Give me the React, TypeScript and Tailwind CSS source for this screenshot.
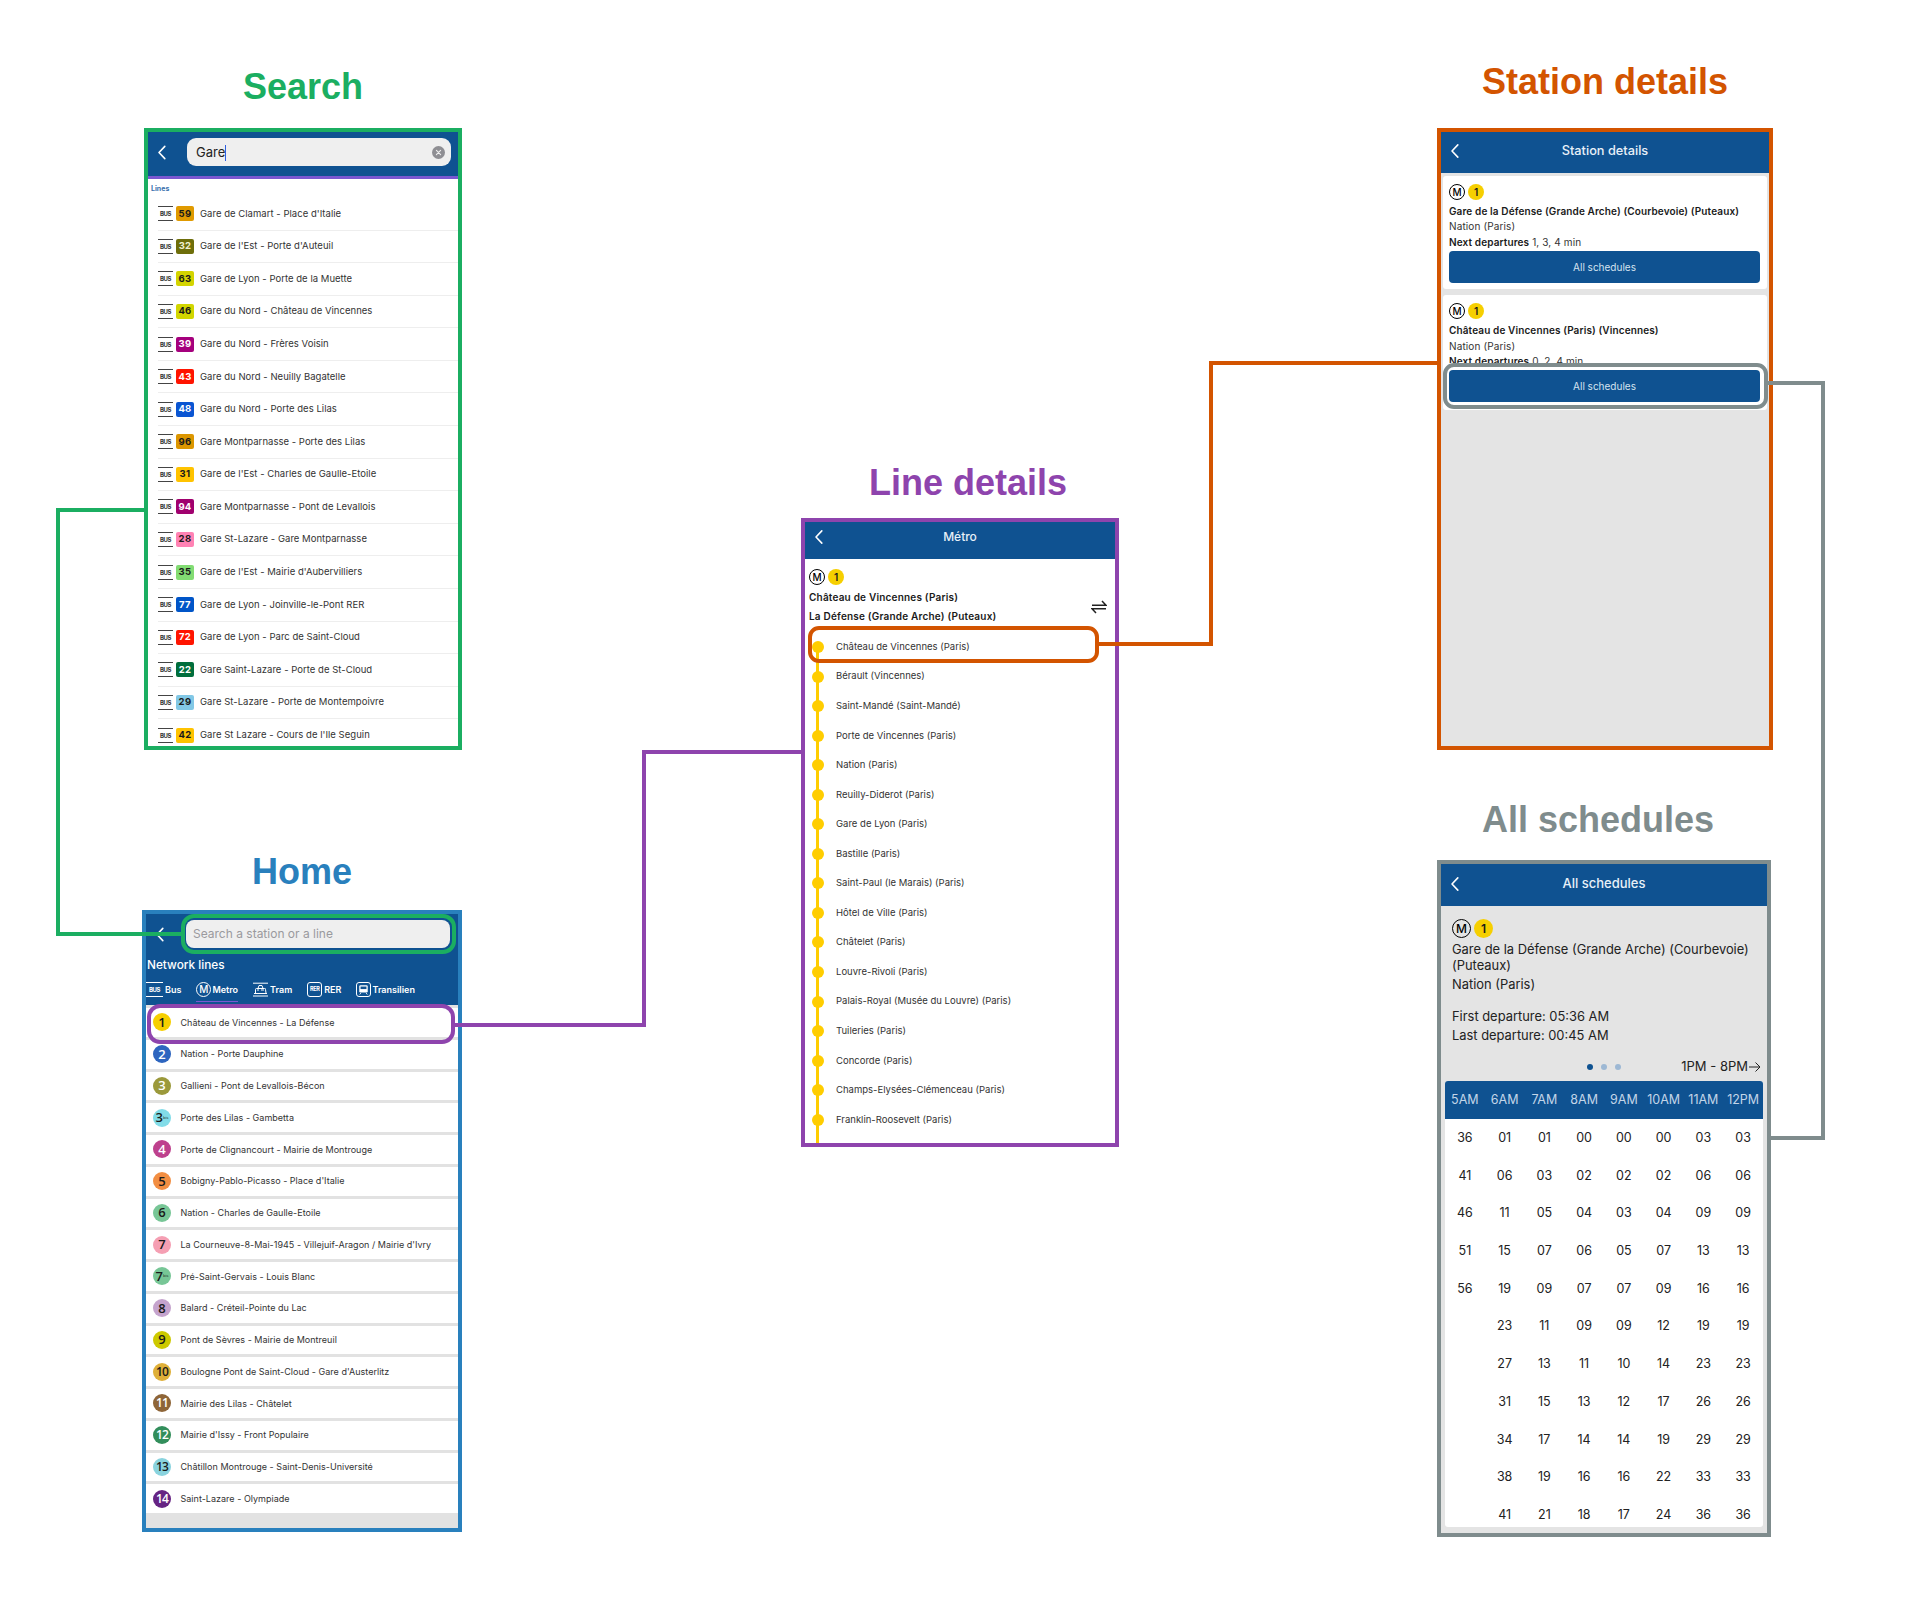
import React from "react";

const busLines: [string, string, string, string][] = [
  ["59", "#e09a00", "#1a1a1a", "Gare de Clamart - Place d'Italie"],
  ["32", "#6e6e0a", "#f0f0d0", "Gare de l'Est - Porte d'Auteuil"],
  ["63", "#d4d400", "#1a1a1a", "Gare de Lyon - Porte de la Muette"],
  ["46", "#d2d600", "#1a1a1a", "Gare du Nord - Château de Vincennes"],
  ["39", "#a5007d", "#ffffff", "Gare du Nord - Frères Voisin"],
  ["43", "#ff1400", "#ffffff", "Gare du Nord - Neuilly Bagatelle"],
  ["48", "#0a55d2", "#ffffff", "Gare du Nord - Porte des Lilas"],
  ["96", "#dc9600", "#1a1a1a", "Gare Montparnasse - Porte des Lilas"],
  ["31", "#ffc300", "#1a1a1a", "Gare de l'Est - Charles de Gaulle-Etoile"],
  ["94", "#a0006e", "#ffffff", "Gare Montparnasse - Pont de Levallois"],
  ["28", "#ff82b4", "#1a1a1a", "Gare St-Lazare - Gare Montparnasse"],
  ["35", "#82dc73", "#1a1a1a", "Gare de l'Est - Mairie d'Aubervilliers"],
  ["77", "#0055c8", "#ffffff", "Gare de Lyon - Joinville-le-Pont RER"],
  ["72", "#ff1400", "#ffffff", "Gare de Lyon - Parc de Saint-Cloud"],
  ["22", "#006e3c", "#ffffff", "Gare Saint-Lazare - Porte de St-Cloud"],
  ["29", "#82c8e6", "#1a1a1a", "Gare St-Lazare - Porte de Montempoivre"],
  ["42", "#ffc300", "#1a1a1a", "Gare St Lazare - Cours de l'Ile Seguin"],
];

const metroLines: [string, string, string, string, string?][] = [
  ["1", "#f6cf00", "#1a1a1a", "Château de Vincennes - La Défense"],
  ["2", "#2d65bf", "#ffffff", "Nation - Porte Dauphine"],
  ["3", "#9b993b", "#ffffff", "Gallieni - Pont de Levallois-Bécon"],
  ["3", "#82dce8", "#1a1a1a", "Porte des Lilas - Gambetta", "bis"],
  ["4", "#be418d", "#ffffff", "Porte de Clignancourt - Mairie de Montrouge"],
  ["5", "#f28e42", "#1a1a1a", "Bobigny-Pablo-Picasso - Place d'Italie"],
  ["6", "#77c696", "#1a1a1a", "Nation - Charles de Gaulle-Etoile"],
  ["7", "#f59fb3", "#1a1a1a", "La Courneuve-8-Mai-1945 - Villejuif-Aragon / Mairie d'Ivry"],
  ["7", "#77c696", "#1a1a1a", "Pré-Saint-Gervais - Louis Blanc", "bis"],
  ["8", "#c5a3cd", "#1a1a1a", "Balard - Créteil-Pointe du Lac"],
  ["9", "#cdc900", "#1a1a1a", "Pont de Sèvres - Mairie de Montreuil"],
  ["10", "#dfb039", "#1a1a1a", "Boulogne Pont de Saint-Cloud - Gare d'Austerlitz"],
  ["11", "#8e6538", "#ffffff", "Mairie des Lilas - Châtelet"],
  ["12", "#328e5b", "#ffffff", "Mairie d'Issy - Front Populaire"],
  ["13", "#89d3de", "#1a1a1a", "Châtillon Montrouge - Saint-Denis-Université"],
  ["14", "#662483", "#ffffff", "Saint-Lazare - Olympiade"],
];

const stops = [
  "Château de Vincennes (Paris)", "Bérault (Vincennes)", "Saint-Mandé (Saint-Mandé)", "Porte de Vincennes (Paris)",
  "Nation (Paris)", "Reuilly-Diderot (Paris)", "Gare de Lyon (Paris)", "Bastille (Paris)",
  "Saint-Paul (le Marais) (Paris)", "Hôtel de Ville (Paris)", "Châtelet (Paris)", "Louvre-Rivoli (Paris)",
  "Palais-Royal (Musée du Louvre) (Paris)", "Tuileries (Paris)", "Concorde (Paris)",
  "Champs-Elysées-Clémenceau (Paris)", "Franklin-Roosevelt (Paris)",
];

const hours = ["5AM", "6AM", "7AM", "8AM", "9AM", "10AM", "11AM", "12PM"];
const times = [
  ["36", "41", "46", "51", "56", "", "", "", "", "", ""],
  ["01", "06", "11", "15", "19", "23", "27", "31", "34", "38", "41"],
  ["01", "03", "05", "07", "09", "11", "13", "15", "17", "19", "21"],
  ["00", "02", "04", "06", "07", "09", "11", "13", "14", "16", "18"],
  ["00", "02", "03", "05", "07", "09", "10", "12", "14", "16", "17"],
  ["00", "02", "04", "07", "09", "12", "14", "17", "19", "22", "24"],
  ["03", "06", "09", "13", "16", "19", "23", "26", "29", "33", "36"],
  ["03", "06", "09", "13", "16", "19", "23", "26", "29", "33", "36"],
];

const Chevron = ({ className = "" }: { className?: string }) => (
  <svg viewBox="0 0 10 16" className={className} fill="none" stroke="currentColor" strokeWidth="1.7" strokeLinecap="round" strokeLinejoin="round">
    <path d="M8 1.5 1.8 8 8 14.5" />
  </svg>
);

const MetroBadge = ({ big }: { big?: boolean }) =>
  big ? (
    <div className="flex items-center gap-[3px]">
      <span className="flex h-[19px] w-[19px] items-center justify-center rounded-full border-[1.5px] border-black text-[12px] font-medium leading-none text-black">M</span>
      <span className="flex h-[19px] w-[19px] items-center justify-center rounded-full bg-[#f6cf00] text-[12px] font-semibold leading-none text-[#1a1a1a]">1</span>
    </div>
  ) : (
    <div className="flex items-center gap-[3px]">
      <span className="flex h-[16px] w-[16px] items-center justify-center rounded-full border-[1.25px] border-black text-[10px] font-medium leading-none text-black">M</span>
      <span className="flex h-[16px] w-[16px] items-center justify-center rounded-full bg-[#f6cf00] text-[10px] font-semibold leading-none text-[#1a1a1a]">1</span>
    </div>
  );

const ScreenHeader = ({ title, h, inner, text }: { title: string; h: string; inner: string; text: string }) => (
  <div className={`shrink-0 bg-[#0f5291] font-medium text-[#e8f0f8] ${h} ${text}`}>
    <div className={`relative flex items-center justify-center ${inner}`}>
      <Chevron className="absolute left-[9px] top-1/2 h-[15px] w-[10px] -translate-y-1/2 text-white" />
      <span>{title}</span>
    </div>
  </div>
);

const Title = ({ className, children }: { className: string; children: React.ReactNode }) => (
  <div className={`absolute whitespace-nowrap text-center font-['Liberation_Sans',Arial,sans-serif] text-[36px] font-bold leading-[40px] ${className}`}>{children}</div>
);

function SearchScreen() {
  return (
    <div className="absolute left-[144px] top-[128px] flex h-[622px] w-[318px] flex-col overflow-hidden border-4 border-[#1bae61] bg-white">
      <div className="flex h-[44px] shrink-0 items-start bg-[#0f5291] pl-[9px] pt-[6px]">
        <Chevron className="mt-[7px] h-[15px] w-[10px] text-white" />
        <div className="ml-[20px] flex h-[28px] w-[264px] items-center rounded-[9px] bg-[#efefef] pl-[9px] pr-[6px] pt-[1px] text-[13px] text-[#222]">
          <span>Gare</span>
          <span className="h-[16px] w-[1px] bg-[#2f5fe0]" />
          <span className="ml-auto flex h-[13px] w-[13px] items-center justify-center rounded-full bg-[#8e8e93]">
            <svg viewBox="0 0 10 10" className="h-[7px] w-[7px]" stroke="#eee" strokeWidth="1.6" strokeLinecap="round"><path d="M2 2l6 6M8 2l-6 6" /></svg>
          </span>
        </div>
      </div>
      <div className="h-[3px] shrink-0 bg-[#7a57d1]" />
      <div className="pl-[3px] pt-[4px] text-[7px] font-bold leading-[12px] text-[#3a70ad]">Lines</div>
      <div className="pl-[10px] pt-[3px]">
        {busLines.map(([n, bg, fg, label]) => (
          <div key={label} className="flex h-[32.58px] items-center border-b border-[#eeeeee] text-[9.5px] tracking-[0.03px] text-[#333]">
            <span className="flex h-[15px] w-[15px] items-center justify-center border-y border-[#444] text-[6px] font-bold tracking-[-0.5px] text-[#333]">BUS</span>
            <span style={{ backgroundColor: bg, color: fg }} className="ml-[3px] flex h-[15px] w-[18px] items-center justify-center rounded-[2px] text-[9.5px] font-bold tracking-[0.3px]">{n}</span>
            <span className="ml-[6px] whitespace-nowrap">{label}</span>
          </div>
        ))}
      </div>
    </div>
  );
}

const TabIcon = ({ children, className = "" }: { children: React.ReactNode; className?: string }) => (
  <span className={`flex h-[15px] w-[15px] shrink-0 items-center justify-center ${className}`}>{children}</span>
);

function HomeScreen() {
  return (
    <div className="absolute left-[142px] top-[910px] flex h-[622px] w-[320px] flex-col overflow-hidden border-4 border-[#2980bd] bg-[#e2e2e2]">
      <div className="h-[91px] shrink-0 bg-[#0f5291] text-white">
        <div className="flex items-start pl-[9px] pt-[6px]">
          <Chevron className="mt-[7px] h-[15px] w-[10px] text-white" />
          <div className="ml-[21px] flex h-[28px] w-[264px] items-center rounded-[8px] bg-[#efefef] pl-[7px] text-[12px] text-[#9a9a9e]">Search a station or a line</div>
        </div>
        <div className="ml-[1px] mt-[9px] text-[11.8px] font-medium leading-[16px]">Network lines</div>
        <div className="mt-[9px] flex items-center gap-[15px] text-[9px] font-semibold leading-[15px]">
          <div className="flex items-center gap-[1px]">
            <span className="flex h-[15px] w-[17px] items-center justify-center border-y border-white text-[6px] font-bold tracking-[-0.4px]">BUS</span>
            <span className="ml-[1px]">Bus</span>
          </div>
          <div className="relative flex items-center gap-[1px]">
            <TabIcon className="rounded-full border border-white text-[10px] font-medium">M</TabIcon>
            <span>Metro</span>
            <span className="absolute -bottom-[5px] left-0 right-0 h-[1px] bg-[#7a57d1]" />
          </div>
          <div className="flex items-center gap-[2px]">
            <TabIcon>
              <svg viewBox="0 0 15 15" className="h-[15px] w-[15px]" fill="none" stroke="white" strokeWidth="1"><path d="M0 1.2h15M0 14h15M1 11.5h13" /><path d="M2.5 11V7.5q0-1 1-1h8q1.500 0 1 1L13 11" /><path d="M5 6.500 6 3.500h3l1 3" /><path d="M4 8h2M8 8h3" /></svg>
            </TabIcon>
            <span>Tram</span>
          </div>
          <div className="flex items-center gap-[2px]">
            <TabIcon className="rounded-[3px] border border-white text-[5.5px] font-bold tracking-[-0.3px]">RER</TabIcon>
            <span>RER</span>
          </div>
          <div className="flex items-center gap-[1px]">
            <TabIcon className="rounded-[3px] border border-white">
              <svg viewBox="0 0 13 13" className="h-[11px] w-[11px]" fill="white"><path d="M3 1.500h7q1.500 0 1.500 1.500v5.500q0 1.500-1.500 1.500H3Q1.500 10 1.500 8.500V3Q1.500 1.500 3 1.500Z" /><path d="M3 3h7v3H3Z" fill="#0f5291" /><path d="M3.500 10.500 2 12.500M9.500 10.500l1.500 2" stroke="white" fill="none" /></svg>
            </TabIcon>
            <span>Transilien</span>
          </div>
        </div>
      </div>
      <div className="mt-[3px] flex flex-col gap-[3px]">
        {metroLines.map(([n, bg, fg, label, bis]) => (
          <div key={label} className="flex h-[28.75px] items-center bg-white pl-[7px] text-[9px] tracking-[0.02px] text-[#333]">
            <span style={{ backgroundColor: bg, color: fg }} className={`flex h-[18px] w-[18px] shrink-0 items-center justify-center rounded-full font-['Open_Sans',sans-serif] font-semibold leading-none ${n.length > 1 ? "text-[12px] tracking-[-0.8px]" : "text-[13px]"}`}>
              {n}
              {bis && <span className="text-[4px] font-normal tracking-normal">bis</span>}
            </span>
            <span className="ml-[9.5px] whitespace-nowrap">{label}</span>
          </div>
        ))}
      </div>
    </div>
  );
}

function LineScreen() {
  return (
    <div className="absolute left-[801px] top-[518px] flex h-[629px] w-[318px] flex-col overflow-hidden border-4 border-[#8e44ad] bg-white">
      <ScreenHeader title="Métro" h="h-[37px]" inner="h-[30px]" text="text-[12px]" />
      <div className="relative px-[4px] pt-[10px]">
        <MetroBadge />
        <div className="mt-[3px] text-[10px] font-semibold leading-[19px] tracking-[0.2px] text-[#1a1a1a]">
          <div>Château de Vincennes (Paris)</div>
          <div>La Défense (Grande Arche) (Puteaux)</div>
        </div>
        <svg viewBox="0 0 16 16" className="absolute right-[8px] top-[40px] h-[16px] w-[16px]" fill="none" stroke="#222" strokeWidth="1.5">
          <path d="M1 6.300h14L11 2M15 9.700H1l4 4.300" />
        </svg>
      </div>
      <div className="ml-[11px] mt-[21px] flex-1 border-l-[3px] border-[#ffcd00]">
        {stops.map((s, i) => (
          <div key={s} className={`flex h-[29.55px] items-center text-[9.5px] tracking-[0.01px] text-[#333] ${i === 0 ? "-mt-[14.77px]" : ""}`}>
            <span className="-ml-[7.5px] h-[12px] w-[12px] shrink-0 rounded-full bg-[#ffcd00]" />
            <span className="ml-[12.500px] whitespace-nowrap">{s}</span>
          </div>
        ))}
      </div>
    </div>
  );
}

function StationCard({ name, next, first }: { name: string; next: string; first?: boolean }) {
  return (
    <div className="rounded-[3px] bg-white pl-[6px] pr-[7px] pt-[8px]">
      <MetroBadge />
      <div className="mt-[4px] text-[10px] leading-[15.4px] tracking-[0.12px] text-[#333]">
        <div className="font-semibold text-[#1a1a1a]">{name}</div>
        <div>Nation (Paris)</div>
        <div className={first ? "" : "h-[9px] overflow-hidden"}>
          <span className="font-semibold text-[#1a1a1a]">Next departures</span> {next}
        </div>
      </div>
      <div className={`flex h-[32px] items-center justify-center rounded-[4px] bg-[#0f5291] text-[10px] text-[#d5e3f0] ${first ? "mt-[1px]" : "mt-[7px]"}`}>All schedules</div>
      <div className={first ? "h-[6px]" : "h-[8px]"} />
    </div>
  );
}

function StationScreen() {
  return (
    <div className="absolute left-[1437px] top-[128px] flex h-[622px] w-[336px] flex-col overflow-hidden border-4 border-[#d35400] bg-[#e4e4e4]">
      <ScreenHeader title="Station details" h="h-[41px]" inner="h-[37px]" text="text-[12.75px]" />
      <div className="flex flex-col gap-[6px] px-[2px] pt-[3px]">
        <StationCard first name="Gare de la Défense (Grande Arche) (Courbevoie) (Puteaux)" next="1, 3, 4 min" />
        <StationCard name="Château de Vincennes (Paris) (Vincennes)" next="0, 2, 4 min" />
      </div>
    </div>
  );
}

function SchedulesScreen() {
  return (
    <div className="absolute left-[1437px] top-[860px] flex h-[677px] w-[334px] flex-col overflow-hidden border-4 border-[#7f8c8d] bg-[#e4e4e4]">
      <ScreenHeader title="All schedules" h="h-[42px]" inner="h-[39px]" text="text-[13px]" />
      <div className="px-[11px] pt-[13px] text-[12.9px] text-[#222]">
        <MetroBadge big />
        <div className="mt-[3.5px] leading-[16px]">Gare de la Défense (Grande Arche) (Courbevoie) (Puteaux)</div>
        <div className="mt-[3px] leading-[16px]">Nation (Paris)</div>
        <div className="mt-[14.5px] leading-[19px]">First departure: 05:36 AM</div>
        <div className="leading-[19px]">Last departure: 00:45 AM</div>
      </div>
      <div className="relative mt-[14px] flex h-[16px] items-center justify-center px-[7px] text-[13px] text-[#222]">
        <div className="flex gap-[8px]">
          <span className="h-[6px] w-[6px] rounded-full bg-[#0f5291]" />
          <span className="h-[6px] w-[6px] rounded-full bg-[#9db8d4]" />
          <span className="h-[6px] w-[6px] rounded-full bg-[#9db8d4]" />
        </div>
        <div className="absolute right-[6px] flex items-center gap-[1px]">
          <span>1PM - 8PM</span>
          <svg viewBox="0 0 12 12" className="h-[12px] w-[12px]" fill="none" stroke="#222" strokeWidth="1"><path d="M0 6h11M6.500 1.500 11 6l-4.500 4.500" /></svg>
        </div>
      </div>
      <div className="mx-[4px] mt-[6px] flex-1 overflow-hidden rounded-[3px] bg-white">
        <div className="grid h-[38px] grid-cols-8 items-center bg-[#0f5291] text-center text-[12.5px] text-[#c3d5e8]">
          {hours.map((h) => <span key={h}>{h}</span>)}
        </div>
        <div className="grid grid-cols-8">
          {times.map((col, i) => (
            <div key={i} className="text-center text-[12.5px] leading-[37.7px] text-[#222]">
              {col.map((t, j) => <div key={j} className="h-[37.7px]">{t}</div>)}
            </div>
          ))}
        </div>
      </div>
      <div className="h-[6px] shrink-0" />
    </div>
  );
}

export default function App() {
  return (
    <div className="relative h-[1602px] w-[1920px] overflow-hidden bg-white font-['Inter',sans-serif]">
      <Title className="left-[143px] top-[67px] w-[320px] text-[#1bae61]">Search</Title>
      <Title className="left-[142px] top-[852px] w-[320px] text-[#2980bd]">Home</Title>
      <Title className="left-[801px] top-[463px] w-[334px] text-[#8e44ad]">Line details</Title>
      <Title className="left-[1437px] top-[62px] w-[336px] text-[#d35400]">Station details</Title>
      <Title className="left-[1430px] top-[800px] w-[336px] text-[#7f8c8d]">All schedules</Title>

      <SearchScreen />
      <HomeScreen />
      <LineScreen />
      <StationScreen />
      <SchedulesScreen />

      <svg className="pointer-events-none absolute left-0 top-0 h-[1602px] w-[1920px]" viewBox="0 0 1920 1602" fill="none" strokeWidth="4">
        <path d="M144 510H58V934H181" stroke="#1bae61" />
        <rect x="183" y="916" width="271" height="36" rx="11" stroke="#1bae61" />
        <path d="M455 1025H644V752H801" stroke="#8e44ad" />
        <rect x="149" y="1006" width="304" height="36" rx="11" stroke="#8e44ad" />
        <path d="M1099 644H1211V363H1437" stroke="#d35400" />
        <rect x="810" y="628" width="287" height="33" rx="9" stroke="#d35400" />
        <path d="M1768 383H1823V1138H1771" stroke="#7f8c8d" />
        <rect x="1445" y="365" width="321" height="42" rx="9" stroke="#7f8c8d" />
      </svg>
    </div>
  );
}
